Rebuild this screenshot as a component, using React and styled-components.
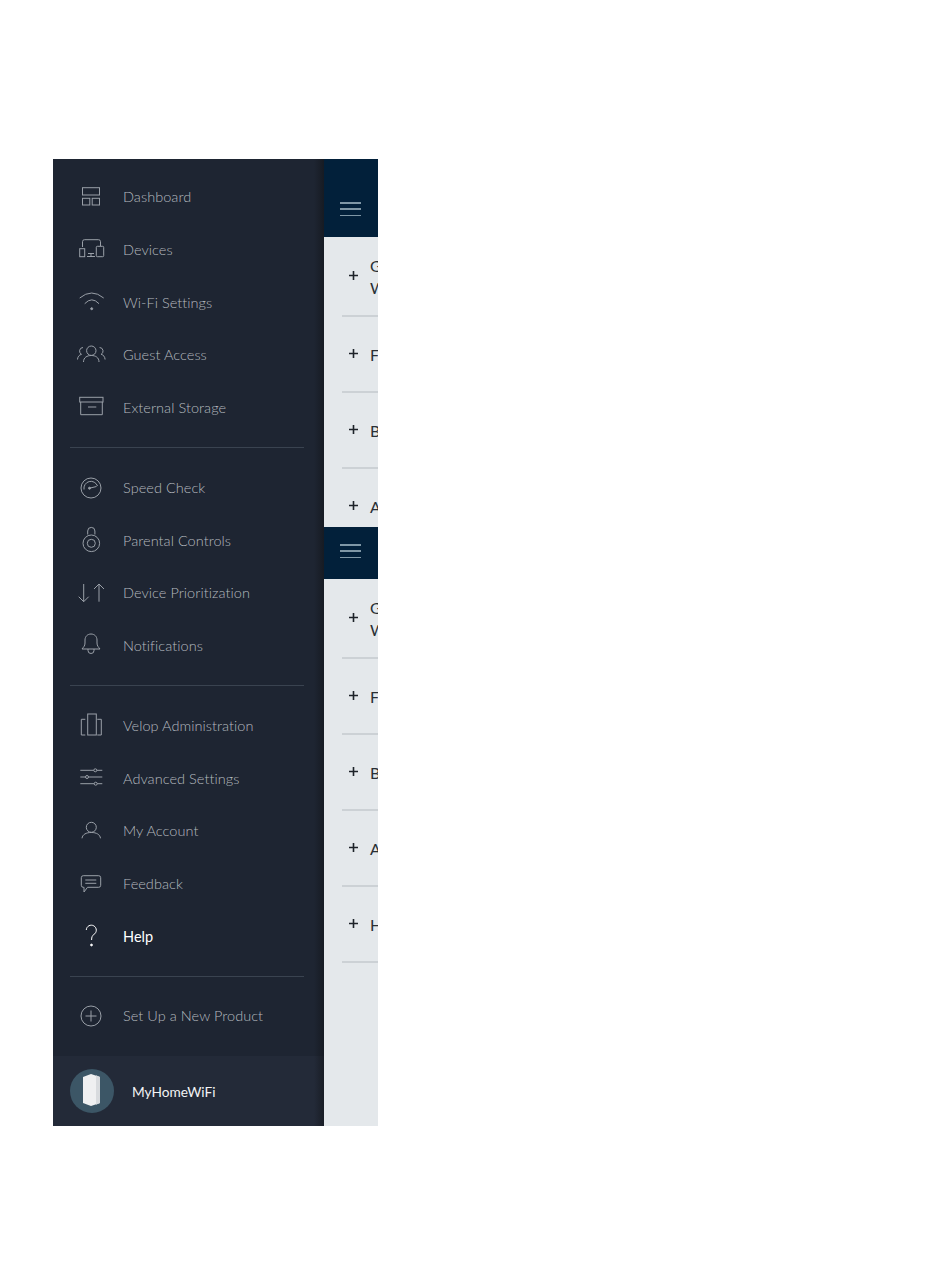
import React from "react";
import styled, { createGlobalStyle } from "styled-components";

const GlobalStyle = createGlobalStyle`
  html, body {
    margin: 0;
    padding: 0;
    background: #fff;
  }
`;

const Screen = styled.div`
  display: flex;
  width: 325px;
  height: 967px;
  margin: 159px 0 150px 53px;
  font-family: Lato, "Liberation Sans", sans-serif;
`;

// Side menu
const Sidebar = styled.nav`
  position: relative;
  display: flex;
  flex-direction: column;
  flex: 0 0 271px;
  background: #1e2532;
`;

const EdgeShadow = styled.div`
  position: absolute;
  top: 0;
  right: 0;
  bottom: 0;
  width: 10px;
  background: linear-gradient(to right, rgba(15, 17, 20, 0), rgba(15, 17, 20, 0.5));
`;

const Section = styled.div`
  display: flex;
  flex-direction: column;
  padding: ${(props) => props.$top}px 0 ${(props) => props.$bottom}px;
`;

const Divider = styled.div`
  height: 1px;
  margin: 0 20px 0 17px;
  background: #3a4350;
`;

const Item = styled.div`
  display: flex;
  align-items: center;
  gap: 12px;
  height: 52.6px;
  padding-left: 18px;
  font-size: 14.5px;
  font-weight: ${(props) => (props.$active ? 400 : 300)};
  letter-spacing: 0.05px;
  color: ${(props) => (props.$active ? "#ffffff" : "#b4b9bf")};
`;

const Icon = styled.svg`
  flex: none;
  width: 40px;
  height: 30px;
  fill: none;
  stroke: ${(props) => (props.$active ? "#ffffff" : "#9aa0a8")};
  stroke-width: 1;
`;

const Footer = styled.div`
  display: flex;
  align-items: center;
  gap: 18px;
  margin-top: auto;
  height: 70px;
  padding-left: 17px;
  background: #232a38;
  font-size: 13.7px;
  color: #f2f3f4;
`;

const Avatar = styled.svg`
  flex: none;
  width: 44px;
  height: 44px;
`;

// Main pane, clipped by the sliding menu
const Pane = styled.main`
  flex: 1;
  display: flex;
  flex-direction: column;
  min-width: 0;
  overflow: hidden;
  background: #e4e8eb;
  font-size: 16px;
  color: #2a2f35;
`;

const Header = styled.header`
  flex: none;
  display: flex;
  flex-direction: column;
  justify-content: flex-end;
  gap: 4.6px;
  height: ${(props) => props.$height}px;
  padding: 0 0 21px 16px;
  box-sizing: border-box;
  background: #02203a;
`;

const BurgerLine = styled.span`
  display: block;
  width: 21px;
  height: 1.5px;
  background: #7f97a6;
`;

const List = styled.div`
  flex: ${(props) => (props.$height ? `0 0 ${props.$height}px` : 1)};
  overflow: hidden;
`;

const Row = styled.div`
  display: flex;
  align-items: center;
  gap: 12px;
  box-sizing: border-box;
  height: ${(props) => (props.$tall ? 80 : 76)}px;
  margin-left: 18px;
  padding-left: 7px;
  border-bottom: 2px solid #ccd1d5;
`;

const PlusMark = styled.svg`
  flex: none;
  width: 9px;
  height: 9px;
  margin-top: -1px;
  stroke: #1d2228;
  stroke-width: 1.6;
`;

const RowText = styled.div`
  margin-top: 2px;
  line-height: 22px;
  white-space: pre-line;
`;

const icons = {
  dashboard: (
    <>
      <rect x="11.5" y="5.7" width="17" height="7.3" />
      <rect x="11.5" y="16.3" width="7.3" height="6.7" />
      <rect x="21.2" y="16.3" width="7.3" height="6.7" />
    </>
  ),
  devices: (
    <>
      <path d="M11.5 13V7.7a2 2 0 0 1 2-2h14a2 2 0 0 1 2 2V12" />
      <rect x="8.7" y="14.7" width="5" height="8" />
      <rect x="25.3" y="12.3" width="7.4" height="10.4" rx="1" />
      <path d="M16 22.5h8M17 19.5h6M20 19.5v3" />
    </>
  ),
  wifi: (
    <>
      <path d="M8.7 11Q20.7 1 32.7 11" />
      <path d="M13.7 16.7Q20.8 9 28 16.7" />
      <circle cx="20.7" cy="21.7" r="1" fill="#9aa0a8" />
    </>
  ),
  guest: (
    <>
      <circle cx="20.3" cy="10.7" r="4.7" />
      <path d="M12.5 22C12.5 17.5 16 15.5 20.3 15.5S28 17.5 28 22" />
      <path d="M12 7.5a3.6 3.6 0 0 0-1.5 6.8C8 15 6.7 16.8 6.5 19.5" />
      <path d="M28.6 7.5a3.6 3.6 0 0 1 1.5 6.8c2.5.7 3.8 2.5 4 5.2" />
    </>
  ),
  storage: (
    <>
      <rect x="8.7" y="5.3" width="23.3" height="4.7" />
      <path d="M9.7 10v12.7h21.6V10M17 15h8.3" />
    </>
  ),
  speed: (
    <>
      <circle cx="20" cy="15" r="10" />
      <path d="M13 16.5a7 7 0 0 1 13.5-3.5" />
      <path d="M18.5 15.2l7-1.7" />
      <circle cx="18.5" cy="15.2" r="1" fill="#9aa0a8" />
    </>
  ),
  lock: (
    <>
      <circle cx="20.3" cy="18.3" r="8.3" />
      <circle cx="20.3" cy="18.3" r="4" />
      <path d="M16.7 9.5V6a3.6 3.6 0 0 1 7.2 0v3.5" />
    </>
  ),
  priority: <path d="M12.7 6v17.7M7.7 18.7l5 5 5-5M28 23.7V6M23 11l5-5 5 5" />,
  bell: (
    <>
      <path d="M11 19c1.5-2 3-3 3-6v-3c0-3.5 2.5-6 6-6s6 2.5 6 6v3c0 3 1.5 4 3 6z" />
      <path d="M17 19v1.5a3 3 0 0 0 6 0V19" />
    </>
  ),
  velop: (
    <>
      <rect x="16.7" y="3" width="8.6" height="21" />
      <path d="M14.3 8.3h-4V24h4M26.3 8.3h4V24h-4" />
    </>
  ),
  sliders: (
    <>
      <path d="M9.3 7.3h13.5M25.8 7.3h5.5M9.3 14h5.2M17.5 14h13.8M9.3 20.7h13.9M26.2 20.7h5.1" />
      <circle cx="24.3" cy="7.3" r="1.5" />
      <circle cx="16" cy="14" r="1.5" />
      <circle cx="24.7" cy="20.7" r="1.5" />
    </>
  ),
  account: (
    <>
      <circle cx="20.3" cy="11.3" r="5" />
      <path d="M11 22.3C11.5 18.5 15 16.5 20.3 16.5S29 18.5 29.5 22.3" />
    </>
  ),
  feedback: (
    <>
      <path d="M12.3 6.7h15.4a2 2 0 0 1 2 2v7.6a2 2 0 0 1-2 2H16.5L13 23v-4.7h-.7a2 2 0 0 1-2-2V8.7a2 2 0 0 1 2-2z" />
      <path d="M14.3 11h11M14.3 14.3h11" />
    </>
  ),
  help: (
    <>
      <path d="M15.3 9a5 5 0 1 1 7.5 4.5c-1.5 1-2.2 2.5-2.2 5.5" />
      <circle cx="20.5" cy="24" r="0.9" fill="#ffffff" />
    </>
  ),
  plus: (
    <>
      <circle cx="20" cy="15" r="10" />
      <path d="M20 9.5v11M14.5 15h11" />
    </>
  ),
};

const groups = [
  {
    top: 11.6,
    bottom: 13.4,
    items: [
      ["dashboard", "Dashboard"],
      ["devices", "Devices"],
      ["wifi", "Wi-Fi Settings"],
      ["guest", "Guest Access"],
      ["storage", "External Storage"],
    ],
  },
  {
    top: 13.4,
    bottom: 13.6,
    items: [
      ["speed", "Speed Check"],
      ["lock", "Parental Controls"],
      ["priority", "Device Prioritization"],
      ["bell", "Notifications"],
    ],
  },
  {
    top: 13.2,
    bottom: 13.8,
    items: [
      ["velop", "Velop Administration"],
      ["sliders", "Advanced Settings"],
      ["account", "My Account"],
      ["feedback", "Feedback"],
      ["help", "Help"],
    ],
  },
  {
    top: 12,
    bottom: 0,
    items: [["plus", "Set Up a New Product"]],
  },
];

const Burger = ({ height }) => (
  <Header $height={height}>
    <BurgerLine />
    <BurgerLine />
    <BurgerLine />
  </Header>
);

const HelpRows = ({ letters }) =>
  letters.map((letter, i) => (
    <Row key={letter} $tall={i === 0}>
      <PlusMark viewBox="0 0 9 9">
        <path d="M4.5 0v9M0 4.5h9" />
      </PlusMark>
      <RowText>{letter}</RowText>
    </Row>
  ));

const App = () => (
  <>
    <GlobalStyle />
    <Screen>
      <Sidebar>
        {groups.map((group, g) => (
          <React.Fragment key={g}>
            {g > 0 && <Divider />}
            <Section $top={group.top} $bottom={group.bottom}>
              {group.items.map(([icon, label]) => (
                <Item key={label} $active={icon === "help"}>
                  <Icon viewBox="0 0 40 30" $active={icon === "help"}>
                    {icons[icon]}
                  </Icon>
                  {label}
                </Item>
              ))}
            </Section>
          </React.Fragment>
        ))}
        <Footer>
          <Avatar viewBox="0 0 44 44">
            <circle cx="22" cy="22" r="22" fill="#3c5666" />
            <path d="M13 8l8-3 9 3v26l-9 3-8-3z" fill="#eff0f1" />
            <path d="M26 6.3l4 1.700v26l-4 1.700z" fill="#d8dbde" />
          </Avatar>
          MyHomeWiFi
        </Footer>
        <EdgeShadow />
      </Sidebar>
      <Pane>
        <Burger height={78} />
        <List $height={290}>
          <HelpRows letters={["G\nW", "F", "B", "A"]} />
        </List>
        <Burger height={52} />
        <List>
          <HelpRows letters={["G\nW", "F", "B", "A", "H"]} />
        </List>
      </Pane>
    </Screen>
  </>
);

export default App;
